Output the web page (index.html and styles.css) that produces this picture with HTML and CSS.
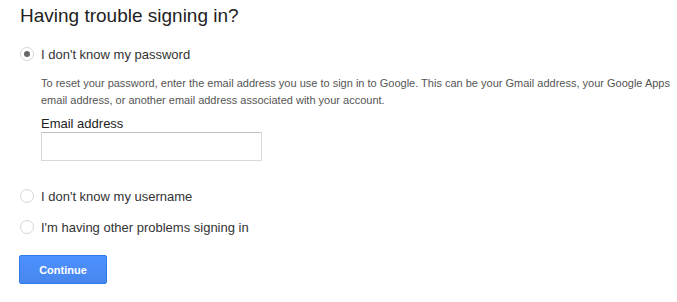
FILE: index.html
```html
<!DOCTYPE html>
<html lang="en">
<head>
	<meta charset="UTF-8">
	<title>Having trouble signing in?</title>
	<link rel="stylesheet" href="styles.css">
</head>
<body>
	<div class="recovery">
		<h1 class="title">Having trouble signing in?</h1>
		<ul class="options">
			<li class="option">
				<label class="option-label"><span class="radio checked"></span>I don't know my password</label>
				<div class="option-body">
					<p class="hint">To reset your password, enter the email address you use to sign in to Google. This can be your Gmail address, your Google Apps email address, or another email address associated with your account.</p>
					<label class="field-label" for="email">Email address</label>
					<input class="field" id="email" type="text">
				</div>
			</li>
			<li class="option">
				<label class="option-label"><span class="radio"></span>I don't know my username</label>
			</li>
			<li class="option">
				<label class="option-label"><span class="radio"></span>I'm having other problems signing in</label>
			</li>
		</ul>
		<button class="btn-continue">Continue</button>
	</div>
</body>
</html>
```

FILE: styles.css
```css
html,body,div,ul,li,h1,p {
	margin: 0;
	padding: 0;
}
body {
	font-family: Arial, "Liberation Sans", sans-serif;
	color: #222;
	background: #fff;
}
li {
	list-style: none;
}
.recovery {
	padding: 4px 0 0 20px;
}
.title {
	font-size: 19px;
	font-weight: normal;
	line-height: 24px;
	color: #222;
}
.options {
	margin-top: 18px;
}
.option {
	margin-bottom: 15px;
}
.option:first-child {
	margin-bottom: 27px;
}
.option-label {
	display: flex;
	align-items: center;
	font-size: 13px;
	height: 16px;
	color: #333;
}
.radio {
	box-sizing: border-box;
	width: 14px;
	height: 14px;
	border: 1px solid #d6d6d6;
	border-radius: 50%;
	margin-right: 7px;
	display: flex;
	align-items: center;
	justify-content: center;
	background: #fff;
}
.radio.checked:after {
	content: '';
	width: 6px;
	height: 6px;
	border-radius: 50%;
	background: #666;
}
.option-body {
	padding: 13px 0 0 21px;
}
.hint {
	font-size: 11px;
	line-height: 17px;
	color: #555;
	padding-right: 4px;
}
.field-label {
	display: block;
	margin-top: 7px;
	font-size: 13px;
	line-height: 16px;
	color: #222;
}
.field {
	box-sizing: border-box;
	display: block;
	width: 221px;
	height: 29px;
	margin-top: 0;
	border: 1px solid #d9d9d9;
	border-top-color: #c0c0c0;
	border-radius: 1px;
	padding: 0 8px;
	font-size: 13px;
}
.btn-continue {
	box-sizing: border-box;
	width: 88px;
	height: 29px;
	margin: 5px 0 0 -1px;
	border: 1px solid #3079ed;
	border-radius: 2px;
	background: linear-gradient(#4d90fe, #4787ed);
	color: #fff;
	font-family: Arial, "Liberation Sans", sans-serif;
	font-size: 11px;
	font-weight: bold;
	cursor: pointer;
}
```
